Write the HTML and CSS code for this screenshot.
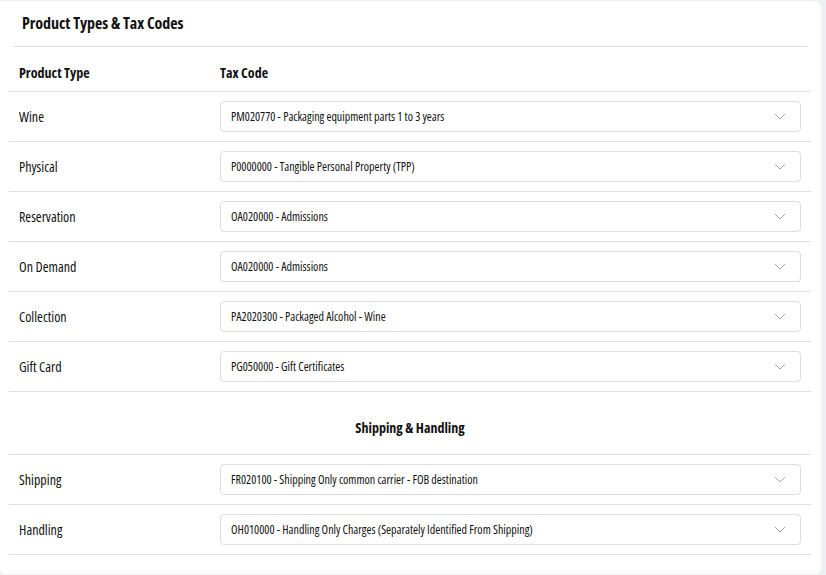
FILE: index.html
```html
<!DOCTYPE html>
<html lang="en">
<head>
    <meta charset="UTF-8" />
    <meta name="viewport" content="width=device-width, initial-scale=1" />
    <title>Product Types &amp; Tax Codes</title>
    <link rel="stylesheet" href="styles.css">
</head>
<body>
    <main class="card">
        <header class="card-header">
            <h2>Product Types &amp; Tax Codes</h2>
        </header>
        <table class="tax-table">
            <thead>
                <tr>
                    <th class="col-type">Product Type</th>
                    <th class="col-code">Tax Code</th>
                </tr>
            </thead>
            <tbody>
                <tr>
                    <td>Wine</td>
                    <td><div class="select"><span>PM020770 - Packaging equipment parts 1 to 3 years</span><svg class="chevron" viewBox="0 0 12 7"><path d="M1 1l5 5 5-5"/></svg></div></td>
                </tr>
                <tr>
                    <td>Physical</td>
                    <td><div class="select"><span>P0000000 - Tangible Personal Property (TPP)</span><svg class="chevron" viewBox="0 0 12 7"><path d="M1 1l5 5 5-5"/></svg></div></td>
                </tr>
                <tr>
                    <td>Reservation</td>
                    <td><div class="select"><span>OA020000 - Admissions</span><svg class="chevron" viewBox="0 0 12 7"><path d="M1 1l5 5 5-5"/></svg></div></td>
                </tr>
                <tr>
                    <td>On Demand</td>
                    <td><div class="select"><span>OA020000 - Admissions</span><svg class="chevron" viewBox="0 0 12 7"><path d="M1 1l5 5 5-5"/></svg></div></td>
                </tr>
                <tr>
                    <td>Collection</td>
                    <td><div class="select"><span>PA2020300 - Packaged Alcohol - Wine</span><svg class="chevron" viewBox="0 0 12 7"><path d="M1 1l5 5 5-5"/></svg></div></td>
                </tr>
                <tr>
                    <td>Gift Card</td>
                    <td><div class="select"><span>PG050000 - Gift Certificates</span><svg class="chevron" viewBox="0 0 12 7"><path d="M1 1l5 5 5-5"/></svg></div></td>
                </tr>
                <tr class="section-row">
                    <th colspan="2">Shipping &amp; Handling</th>
                </tr>
                <tr>
                    <td>Shipping</td>
                    <td><div class="select"><span>FR020100 - Shipping Only common carrier - FOB destination</span><svg class="chevron" viewBox="0 0 12 7"><path d="M1 1l5 5 5-5"/></svg></div></td>
                </tr>
                <tr>
                    <td>Handling</td>
                    <td><div class="select"><span>OH010000 - Handling Only Charges (Separately Identified From Shipping)</span><svg class="chevron" viewBox="0 0 12 7"><path d="M1 1l5 5 5-5"/></svg></div></td>
                </tr>
            </tbody>
        </table>
    </main>
</body>
</html>
```

FILE: styles.css
```css
:root {
    --color-fondo: #eff0f3;
    --color-texto: #111111;
    --color-linea: #dedfe3;
    --color-borde: #dcdde2;
    --font-family: 'Open Sans', 'Liberation Sans', sans-serif;
}

*, *::before, *::after {
    box-sizing: border-box;
    margin: 0;
    padding: 0;
}

body {
    font-family: var(--font-family);
    font-stretch: 75%;
    background-color: var(--color-fondo);
    color: var(--color-texto);
    padding: 1px 5px 0 0;
    min-height: 100vh;
}

.card {
    background: #ffffff;
    border-radius: 0 6px 6px 6px;
    min-height: 572px;
    padding-bottom: 19px;
}

.card-header {
    margin: 0 14px 0 13px;
    padding: 12px 9px 0;
    height: 46px;
    border-bottom: 1px solid var(--color-linea);
}

.card-header h2 {
    font-size: 16px;
    font-weight: 700;
    line-height: 20px;
    letter-spacing: -0.05px;
}

.tax-table {
    margin: 0 10px 0 9px;
    width: 802px;
    border-collapse: collapse;
}

.tax-table th,
.tax-table td {
    text-align: left;
    vertical-align: middle;
    border-bottom: 1px solid var(--color-linea);
}

.tax-table thead th {
    font-size: 14px;
    font-weight: 700;
    height: 44px;
    padding: 7px 0 0 10px;
}

.tax-table .col-type {
    width: 210px;
}

.tax-table .col-code {
    padding-left: 1px;
}

.tax-table td {
    height: 50px;
    font-size: 14px;
    padding-left: 10px;
}

.tax-table td + td {
    padding-left: 1px;
}

.section-row th {
    text-align: center !important;
    font-size: 14px;
    font-weight: 700;
    height: 63px;
    padding-top: 10px;
}

.select {
    display: flex;
    align-items: center;
    justify-content: space-between;
    width: 581px;
    height: 31px;
    border: 1px solid var(--color-borde);
    border-radius: 4px;
    padding: 0 14px 0 10px;
    font-size: 12px;
}

.chevron {
    width: 12px;
    height: 7px;
    fill: none;
    stroke: #a5a5a8;
    stroke-width: 1;
}
```
